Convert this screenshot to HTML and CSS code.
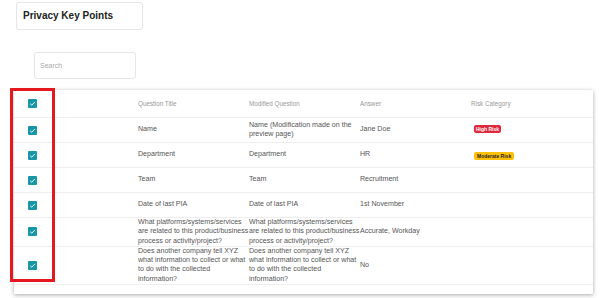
FILE: index.html
```html
<!DOCTYPE html>
<html lang="en">
<head>
  <meta charset="UTF-8" />
  <title>Privacy Key Points</title>
  <link rel="stylesheet" href="styles.css">
</head>
<body>
  <div class="page-title">Privacy Key Points</div>

  <input class="search" type="text" placeholder="Search" />

  <div class="card">
    <table class="points">
      <colgroup>
        <col class="col-check" />
        <col class="col-text" />
        <col class="col-text" />
        <col class="col-text" />
        <col />
      </colgroup>
      <thead>
        <tr>
          <th class="check"><span class="box"><svg viewBox="0 0 9 9"><path d="M2.2 4.8 L3.8 6.2 L6.9 2.9" /></svg></span></th>
          <th>Question Title</th>
          <th>Modified Question</th>
          <th>Answer</th>
          <th>Risk Category</th>
        </tr>
      </thead>
      <tbody>
        <tr>
          <td class="check"><span class="box"><svg viewBox="0 0 9 9"><path d="M2.2 4.8 L3.8 6.2 L6.9 2.9" /></svg></span></td>
          <td>Name</td>
          <td>Name (Modification made on the preview page)</td>
          <td>Jane Doe</td>
          <td><span class="badge high">High Risk</span></td>
        </tr>
        <tr>
          <td class="check"><span class="box"><svg viewBox="0 0 9 9"><path d="M2.2 4.8 L3.8 6.2 L6.9 2.9" /></svg></span></td>
          <td>Department</td>
          <td>Department</td>
          <td>HR</td>
          <td><span class="badge moderate">Moderate Risk</span></td>
        </tr>
        <tr>
          <td class="check"><span class="box"><svg viewBox="0 0 9 9"><path d="M2.2 4.8 L3.8 6.2 L6.9 2.9" /></svg></span></td>
          <td>Team</td>
          <td>Team</td>
          <td>Recruitment</td>
          <td></td>
        </tr>
        <tr>
          <td class="check"><span class="box"><svg viewBox="0 0 9 9"><path d="M2.2 4.8 L3.8 6.2 L6.9 2.9" /></svg></span></td>
          <td>Date of last PIA</td>
          <td>Date of last PIA</td>
          <td>1st November</td>
          <td></td>
        </tr>
        <tr class="long">
          <td class="check"><span class="box"><svg viewBox="0 0 9 9"><path d="M2.2 4.8 L3.8 6.2 L6.9 2.9" /></svg></span></td>
          <td>What platforms/systems/services are related to this product/business process or activity/project?</td>
          <td>What platforms/systems/services are related to this product/business process or activity/project?</td>
          <td>Accurate, Workday</td>
          <td></td>
        </tr>
        <tr class="long">
          <td class="check"><span class="box"><svg viewBox="0 0 9 9"><path d="M2.2 4.8 L3.8 6.2 L6.9 2.9" /></svg></span></td>
          <td>Does another company tell XYZ what information to collect or what to do with the collected information?</td>
          <td>Does another company tell XYZ what information to collect or what to do with the collected information?</td>
          <td>No</td>
          <td></td>
        </tr>
      </tbody>
    </table>
    <div class="card-foot"></div>
  </div>

  <!-- highlight drawn over the checkbox column -->
  <div class="highlight"></div>
</body>
</html>
```

FILE: styles.css
```css
body {
  margin: 0;
  background: #fff;
  font-family: "Liberation Sans", Arial, sans-serif;
  color: #555;
  position: relative;
  height: 298px;
  overflow: hidden;
}

.page-title {
  margin: 2px 0 0 16px;
  width: 127px;
  height: 28px;
  box-sizing: border-box;
  border: 1px solid #e6e6e6;
  border-radius: 3px;
  padding-left: 6px;
  font-size: 10px;
  font-weight: bold;
  color: #222;
  line-height: 26px;
}

.search {
  display: block;
  margin: 22px 0 0 34px;
  width: 102px;
  height: 27px;
  box-sizing: border-box;
  border: 1px solid #e6e6e6;
  border-radius: 3px;
  padding: 0 5px;
  font-family: "Liberation Sans", Arial, sans-serif;
  font-size: 7px;
  outline: none;
}

.search::placeholder {
  color: #aaa;
}

.card {
  margin: 11px 0 0 14px;
  width: 579px;
  background: #fff;
  box-shadow: 0 1px 4px rgba(0, 0, 0, 0.35);
}

.points {
  width: 100%;
  border-collapse: collapse;
  table-layout: fixed;
  font-size: 7.1px;
  line-height: 9.3px;
}

.col-check {
  width: 124px;
}

.col-text {
  width: 111px;
}

.points th {
  height: 27px;
  padding: 0;
  text-align: left;
  font-weight: normal;
  font-size: 6.3px;
  color: #999;
  border-bottom: 1px solid #eee;
}

.points td {
  height: 24px;
  padding: 0;
  vertical-align: middle;
  border-bottom: 1px solid #eee;
}

.points .long td {
  height: 26px;
}

.points .check {
  padding-left: 14px;
}

.box {
  display: block;
  width: 9px;
  height: 9px;
  border-radius: 1px;
  background: #1797a6;
}

.box svg {
  display: block;
  width: 9px;
  height: 9px;
  fill: none;
  stroke: #fff;
  stroke-width: 0.9;
}

.badge {
  display: inline-block;
  margin-left: 3px;
  padding: 0 2px;
  border-radius: 2px;
  font-size: 5px;
  font-weight: bold;
  line-height: 8px;
}

.high {
  background: #e0283c;
  color: #fff;
}

.moderate {
  margin-top: 3px;
  padding: 0 3px;
  background: #ffc107;
  color: #222;
}

.card-foot {
  height: 9px;
}

.highlight {
  position: absolute;
  left: 10px;
  top: 88px;
  width: 45px;
  height: 194px;
  box-sizing: border-box;
  border: 3px solid #e3191f;
}
```
